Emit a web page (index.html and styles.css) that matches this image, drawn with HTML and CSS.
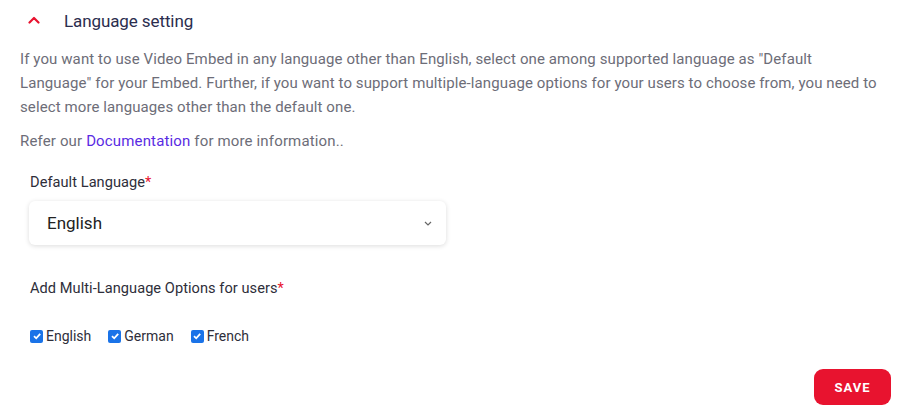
FILE: index.html
```html
<!DOCTYPE html>
<html>
<head>
<meta charset="utf-8">
<link rel="stylesheet" href="styles.css">
</head>
<body>
<div class="panel">
  <div class="header">
    <svg class="chev" width="12" height="8" viewBox="0 0 12 8"><path d="M1.5 6.5 L6 2 L10.5 6.5" fill="none" stroke="#e8132f" stroke-width="2.2" stroke-linecap="round" stroke-linejoin="round"/></svg>
    <span class="title">Language setting</span>
  </div>
  <p class="desc">If you want to use Video Embed in any language other than English, select one among supported language as "Default Language" for your Embed. Further, if you want to support multiple-language options for your users to choose from, you need to select more languages other than the default one.</p>
  <p class="refer">Refer our <a class="link">Documentation</a> for more information..</p>
  <div class="field">
    <div class="label">Default Language<span class="req">*</span></div>
    <div class="select">
      <span>English</span>
      <svg width="8" height="5" viewBox="0 0 8 5"><path d="M1 1 L4 4 L7 1" fill="none" stroke="#666" stroke-width="1.2"/></svg>
    </div>
  </div>
  <div class="field multi">
    <div class="label">Add Multi-Language Options for users<span class="req">*</span></div>
    <div class="checks">
      <label class="check"><span class="box"><svg width="10" height="10" viewBox="0 0 10 10"><path d="M2 5.2 L4.2 7.3 L8.2 2.8" fill="none" stroke="#fff" stroke-width="1.8"/></svg></span>English</label>
      <label class="check"><span class="box"><svg width="10" height="10" viewBox="0 0 10 10"><path d="M2 5.2 L4.2 7.3 L8.2 2.8" fill="none" stroke="#fff" stroke-width="1.8"/></svg></span>German</label>
      <label class="check"><span class="box"><svg width="10" height="10" viewBox="0 0 10 10"><path d="M2 5.2 L4.2 7.3 L8.2 2.8" fill="none" stroke="#fff" stroke-width="1.8"/></svg></span>French</label>
    </div>
  </div>
  <div class="actions">
    <button class="save">SAVE</button>
  </div>
</div>
</body>
</html>
```
FILE: styles.css
```css
* { box-sizing: border-box; }
html, body { margin: 0; padding: 0; background: #fff; }
body { font-family: Roboto, "Liberation Sans", sans-serif; width: 917px; height: 420px; overflow: hidden; }
.panel { padding: 0 26px 0 20px; }
.header { display: flex; align-items: center; height: 42px; padding-left: 8px; }
.chev { display: block; margin-top: -2px; }
.title { margin-left: 24px; font-size: 17px; color: #2b2d4e; letter-spacing: -0.1px; }
.desc { margin: 5px 10px 0 0; font-size: 15px; line-height: 24px; color: #6d6d78; letter-spacing: 0.1px; }
.refer { margin: 10px 0 0; font-size: 15px; line-height: 24px; color: #6d6d78; letter-spacing: 0.15px; }
.link { color: #5a2be3; }
.field { padding-left: 10px; }
.label { font-size: 14.6px; color: #2e2e3a; line-height: 20px; margin-top: 19px; letter-spacing: 0.05px; }
.req { color: #e8132f; }
.select { margin-top: 9px; margin-left: -1px; width: 417px; height: 44px; border-radius: 6px; background: #fff; box-shadow: 0 1px 5px rgba(0,0,0,0.14); display: flex; align-items: center; justify-content: space-between; padding: 0 14px 0 18px; font-size: 17px; color: #222; }
.select svg { display: block; }
.multi .label { margin-top: 33px; }
.checks { display: flex; gap: 17px; margin-top: 30px; }
.check { display: flex; align-items: center; font-size: 14px; color: #2e2e3a; letter-spacing: 0; }
.box { width: 13px; height: 13px; border-radius: 2px; background: #1a73e8; display: flex; align-items: center; justify-content: center; margin-right: 3px; }
.box svg { display: block; }
.actions { display: flex; justify-content: flex-end; margin-top: 25px; }
.save { width: 77px; height: 36px; border: none; border-radius: 9px; background: #e8132f; color: #fff; font-family: Roboto, sans-serif; font-weight: 700; font-size: 13px; letter-spacing: 1px; }
```
